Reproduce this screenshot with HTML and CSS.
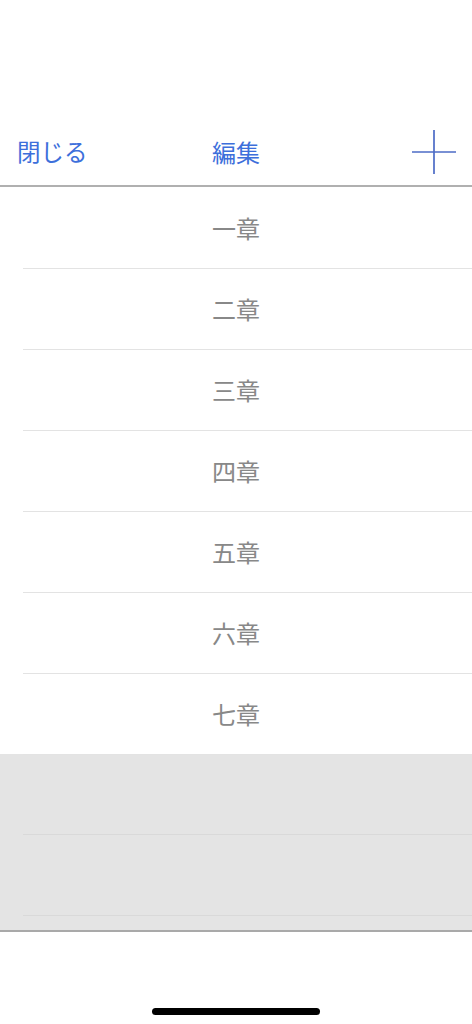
FILE: index.html
```html
<!DOCTYPE html>
<html lang="ja">
<head>
<meta charset="utf-8">
<link rel="stylesheet" href="styles.css">
</head>
<body>
<div class="screen">
  <div class="status"></div>
  <header class="nav">
    <span class="nav-btn left">閉じる</span>
    <span class="nav-title">編集</span>
    <span class="nav-btn right">
      <svg width="44" height="44" viewBox="0 0 44 44"><path d="M22 0V44M0 22H44" stroke="#4d6cc6" stroke-width="1.7" fill="none"/></svg>
    </span>
  </header>
  <ul class="list">
    <li class="row"><span>一章</span></li>
    <li class="row"><span>二章</span></li>
    <li class="row"><span>三章</span></li>
    <li class="row"><span>四章</span></li>
    <li class="row"><span>五章</span></li>
    <li class="row"><span>六章</span></li>
    <li class="row"><span>七章</span></li>
  </ul>
  <div class="empty">
    <div class="erow"></div>
    <div class="erow"></div>
  </div>
  <div class="footer"><div class="home"></div></div>
</div>
</body>
</html>
```

FILE: styles.css
```css
* { box-sizing: border-box; }
html, body { margin: 0; padding: 0; background: #fff; }
body { font-family: "Noto Sans CJK JP", "Noto Sans", sans-serif; }
.screen { width: 472px; height: 1024px; display: flex; flex-direction: column; overflow: hidden; }
.status { height: 118px; flex: none; }
.nav { height: 69px; flex: none; position: relative; display: flex; align-items: center; justify-content: center; border-bottom: 2px solid #b0b0b0; }
.nav-title { font-size: 24px; color: #3d6fdb; line-height: 1; }
.nav-btn { position: absolute; top: 0; bottom: 0; display: flex; align-items: center; color: #3d6fdb; }
.nav-btn.left { left: 17px; font-size: 23.5px; line-height: 1; }
.nav-btn.right { right: 16px; }
.list { list-style: none; margin: 0; padding: 0; flex: none; }
.row { height: 81px; display: flex; align-items: center; justify-content: center; position: relative; font-size: 24px; color: #888; }
.row::after { content: ""; position: absolute; left: 23px; right: 0; bottom: -1px; height: 1px; background: #e3e3e3; }
.empty { flex: none; height: 178px; background: #e4e4e4; border-bottom: 2px solid #a9a9a9; }
.erow { height: 81px; margin-left: 23px; border-bottom: 1px solid #d9d9d9; }
.footer { flex: 1; display: flex; justify-content: center; align-items: flex-end; padding-bottom: 9px; }
.home { width: 168px; height: 7px; border-radius: 4px; background: #000; }
```
